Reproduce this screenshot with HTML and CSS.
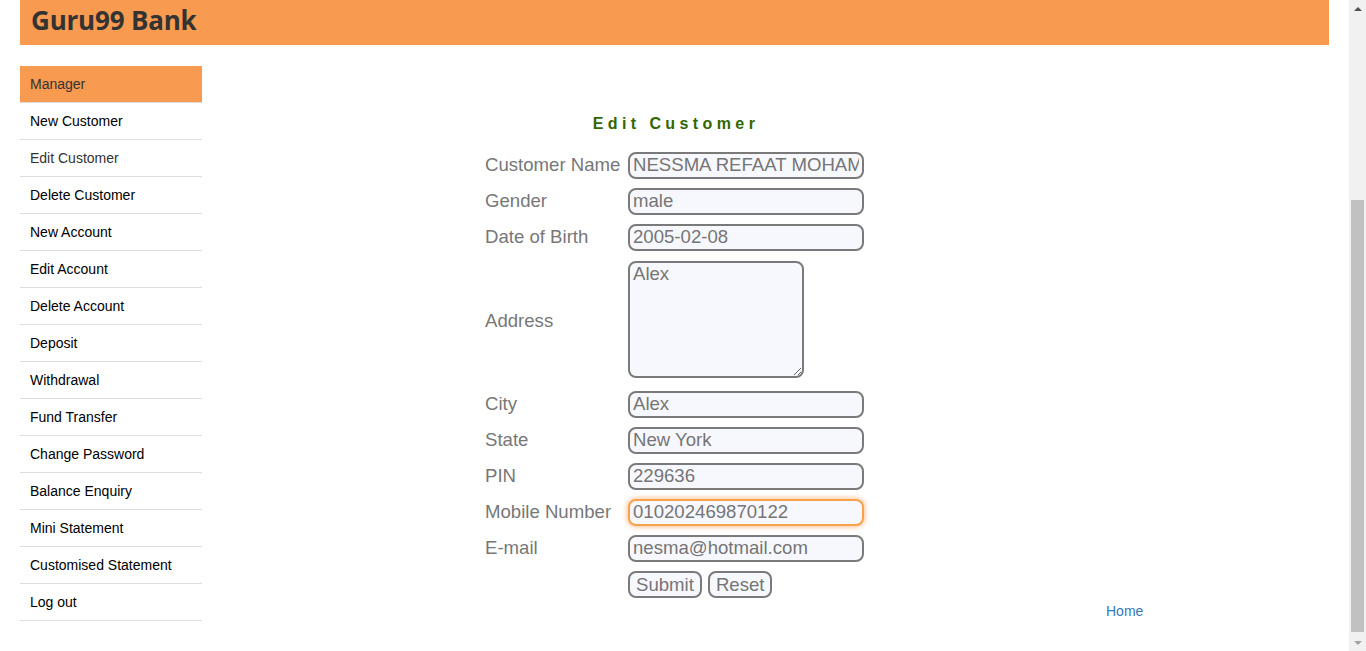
FILE: index.html
```html
<!DOCTYPE html>
<html lang="en">
<head>
<meta charset="utf-8">
<title>Guru99 Bank Manager</title>
<link rel="stylesheet" href="styles.css">
</head>
<body>
<div class="page">
  <header class="header"><h2 class="brand">Guru99 Bank</h2></header>
  <div class="content">
    <ul class="menu">
      <li class="menu-head">Manager</li>
      <li><a href="#">New Customer</a></li>
      <li><a href="#" class="visited">Edit Customer</a></li>
      <li><a href="#">Delete Customer</a></li>
      <li><a href="#">New Account</a></li>
      <li><a href="#">Edit Account</a></li>
      <li><a href="#">Delete Account</a></li>
      <li><a href="#">Deposit</a></li>
      <li><a href="#">Withdrawal</a></li>
      <li><a href="#">Fund Transfer</a></li>
      <li><a href="#">Change Password</a></li>
      <li><a href="#">Balance Enquiry</a></li>
      <li><a href="#">Mini Statement</a></li>
      <li><a href="#">Customised Statement</a></li>
      <li><a href="#">Log out</a></li>
    </ul>
    <main class="main">
      <form class="form">
        <p class="heading">Edit Customer</p>
        <div class="row"><label class="lbl">Customer Name</label><input class="field" type="text" value="NESSMA REFAAT MOHAMED"></div>
        <div class="row"><label class="lbl">Gender</label><input class="field" type="text" value="male"></div>
        <div class="row"><label class="lbl">Date of Birth</label><input class="field" type="text" value="2005-02-08"></div>
        <div class="row row-tall"><label class="lbl">Address</label><textarea class="area">Alex</textarea></div>
        <div class="row"><label class="lbl">City</label><input class="field" type="text" value="Alex"></div>
        <div class="row"><label class="lbl">State</label><input class="field" type="text" value="New York"></div>
        <div class="row"><label class="lbl">PIN</label><input class="field" type="text" value="229636"></div>
        <div class="row"><label class="lbl">Mobile Number</label><input class="field focus" type="text" value="010202469870122"></div>
        <div class="row"><label class="lbl">E-mail</label><input class="field" type="text" value="nesma@hotmail.com"></div>
        <div class="row"><span class="lbl"></span><div class="btns"><button type="button" class="btn">Submit</button><button type="button" class="btn">Reset</button></div></div>
      </form>
      <div class="home-row"><a href="#" class="home">Home</a></div>
    </main>
  </div>
</div>
<div class="scrollbar">
  <div class="sb-btn"><span class="arrow-up"></span></div>
  <div class="sb-track"><div class="sb-thumb"></div></div>
  <div class="sb-btn"><span class="arrow-down"></span></div>
</div>
</body>
</html>
```
FILE: styles.css
```css
html, body {
  margin: 0;
  padding: 0;
  height: 100%;
}
body {
  display: flex;
  overflow: hidden;
  background: #fff;
  font-family: "Liberation Sans", Arial, sans-serif;
}
.page {
  flex: 1;
  padding: 0 20px;
  min-width: 0;
}
.header {
  height: 45px;
  box-sizing: border-box;
  background: #f89a4f;
  padding: 0 0 5px 11px;
  display: flex;
  align-items: center;
}
.brand {
  margin: 0;
  font-family: "Open Sans", sans-serif;
  font-weight: 700;
  font-size: 26px;
  color: #333;
  letter-spacing: -0.2px;
}
.content {
  display: flex;
  margin-top: 21px;
}
.menu {
  list-style: none;
  margin: 0;
  padding: 0;
  width: 182px;
  flex: none;
}
.menu li {
  height: 36px;
  border-bottom: 1px solid #ddd;
  display: flex;
  align-items: center;
  padding-left: 10px;
  font-size: 14px;
}
.menu li.menu-head {
  background: #f89a4f;
  color: #333;
}
.menu a {
  color: #000;
  text-decoration: none;
}
.menu a.visited {
  color: #333;
}
.main {
  flex: 1;
}
.form {
  width: 378px;
  margin: 49px 0 0 283px;
}
.heading {
  margin: 0 0 14px;
  text-align: center;
  font-size: 16px;
  line-height: 18px;
  font-weight: 700;
  letter-spacing: 4.4px;
  padding-left: 4px;
  color: #336600;
}
.row {
  display: flex;
  align-items: center;
  height: 36px;
}
.row-tall {
  height: 131px;
}
.lbl {
  width: 143px;
  flex: none;
  font-size: 18.6px;
  color: #777;
}
.field, .area, .btn {
  box-sizing: border-box;
  border: 2px solid #7a7a7a;
  border-radius: 8px;
  background: #f7f8fd;
  font-family: "Liberation Sans", Arial, sans-serif;
  font-size: 18.6px;
  color: #757575;
  outline: none;
  margin: 0;
}
.field {
  width: 236px;
  height: 27px;
  padding: 0 3px;
}
.field.focus {
  border-color: #f8a24c;
  box-shadow: 0 0 5px 1px rgba(248, 154, 79, 0.6);
}
.area {
  width: 176px;
  height: 117px;
  padding: 0 3px;
  resize: both;
  line-height: 22px;
  margin-bottom: 2px;
}
.btns {
  display: flex;
  gap: 6px;
}
.btn {
  height: 27px;
  padding: 0 6px;
  line-height: 21px;
}
.home-row {
  margin: 1px 0 0 904px;
  line-height: 16px;
  height: 16px;
}
.home {
  font-size: 14px;
  color: #337ab7;
  text-decoration: none;
}
.scrollbar {
  width: 17px;
  flex: none;
  background: #f1f1f1;
  display: flex;
  flex-direction: column;
}
.sb-btn {
  height: 17px;
  display: flex;
  align-items: center;
  justify-content: center;
}
.arrow-up {
  width: 0;
  height: 0;
  border-left: 4px solid transparent;
  border-right: 4px solid transparent;
  border-bottom: 4px solid #505050;
}
.arrow-down {
  width: 0;
  height: 0;
  border-left: 4px solid transparent;
  border-right: 4px solid transparent;
  border-top: 4px solid #a3a3a3;
}
.sb-track {
  flex: 1;
  padding: 0 2px;
}
.sb-thumb {
  margin-top: 183px;
  height: 432px;
  background: #c1c1c1;
}
```
